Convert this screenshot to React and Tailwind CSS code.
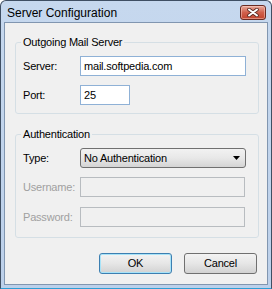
import React from 'react';

const btn =
  'w-[73px] h-[21px] rounded-[3px] border text-[11px] leading-none text-black bg-gradient-to-b from-[#f3f3f3] via-[#e6e6e6] to-[#d2d2d2]';

const CloseGlyph = () => (
  <svg width="12" height="9" viewBox="0 0 12 9">
    <path d="M2 1.5 L10 7.5 M10 1.5 L2 7.5" stroke="#5a2a22" strokeWidth="3.6" strokeLinecap="round" />
    <path d="M2 1.5 L10 7.5 M10 1.5 L2 7.5" stroke="#ffffff" strokeWidth="2" strokeLinecap="round" />
  </svg>
);

const Row = ({ label, disabled, children, className = '' }) => (
  <div className={`flex items-center h-[20px] ${className}`}>
    <span className={`w-[57px] ${disabled ? 'text-[#a0a0a0]' : 'text-black'}`}>{label}</span>
    {children}
  </div>
);

export default function App() {
  return (
    <div className="w-[272px] h-[289px] flex flex-col bg-gradient-to-b from-[#c6d8ee] to-[#bcd0ea] border border-[#3f4f63] border-b-[#2d9fd6] rounded-t-[6px] font-['Liberation_Sans',Arial,sans-serif] text-[11px] tracking-[-0.2px] overflow-hidden">
      {/* Title bar */}
      <div className="h-[21px] flex items-start justify-between pl-[6px] pr-[5px]">
        <span className="text-[12px] leading-[15px] mt-[5px] tracking-normal text-black">Server Configuration</span>
        <button className="mt-[4px] w-[26px] h-[15px] rounded-[3px] border border-[#6a2b22] bg-gradient-to-b from-[#e8aa9c] via-[#d0604c] to-[#c2432c] flex items-center justify-center shadow-[inset_0_0_0_1px_rgba(255,220,210,0.45)]">
          <CloseGlyph />
        </button>
      </div>

      {/* Client area */}
      <div className="flex-1 mx-[3px] mb-[3px] border border-[#8196b0] bg-[#f0f0f0] flex flex-col">
        <fieldset className="mt-[13px] ml-[10px] mr-[8px] border border-[#d5dfe5] rounded-[3px] pl-[7px] pb-[8px]">
          <legend className="ml-[-2px] px-[2px] leading-[13px] text-black">Outgoing Mail Server</legend>
          <Row label="Server:" className="mt-[7px]">
            <input
              defaultValue="mail.softpedia.com"
              className="w-[166px] h-[20px] px-[3px] border border-[#8fb1d6] bg-white text-[11px] text-black outline-none"
            />
          </Row>
          <Row label="Port:" className="mt-[9px]">
            <input
              defaultValue="25"
              className="w-[50px] h-[20px] px-[3px] border border-[#8fb1d6] bg-white text-[11px] text-black outline-none"
            />
          </Row>
        </fieldset>

        <fieldset className="mt-[14px] ml-[10px] mr-[8px] border border-[#d5dfe5] rounded-[3px] pl-[7px] pb-[10px]">
          <legend className="ml-[-2px] px-[2px] leading-[13px] text-black">Authentication</legend>
          <Row label="Type:" className="mt-[7px]">
            <div className="w-[166px] h-[20px] rounded-[3px] border border-[#707070] bg-gradient-to-b from-[#f2f2f2] via-[#e8e8e8] to-[#d4d4d4] flex items-center justify-between pl-[3px] pr-[5px]">
              <span className="text-black">No Authentication</span>
              <svg width="7" height="4" viewBox="0 0 7 4">
                <path d="M0 0 H7 L3.5 4 Z" fill="#000" />
              </svg>
            </div>
          </Row>
          <Row label="Username:" disabled className="mt-[9px]">
            <div className="w-[165px] h-[20px] border border-[#b8bcc0] bg-[#f0f0f0]" />
          </Row>
          <Row label="Password:" disabled className="mt-[10px]">
            <div className="w-[165px] h-[20px] border border-[#b8bcc0] bg-[#f0f0f0]" />
          </Row>
        </fieldset>

        <div className="mt-[15px] mr-[10px] flex justify-end gap-[12px]">
          <button className={`${btn} border-[#3c7fb1] shadow-[inset_0_0_0_1px_#a8e3f8]`}>OK</button>
          <button className={`${btn} border-[#707070]`}>Cancel</button>
        </div>
      </div>
    </div>
  );
}
